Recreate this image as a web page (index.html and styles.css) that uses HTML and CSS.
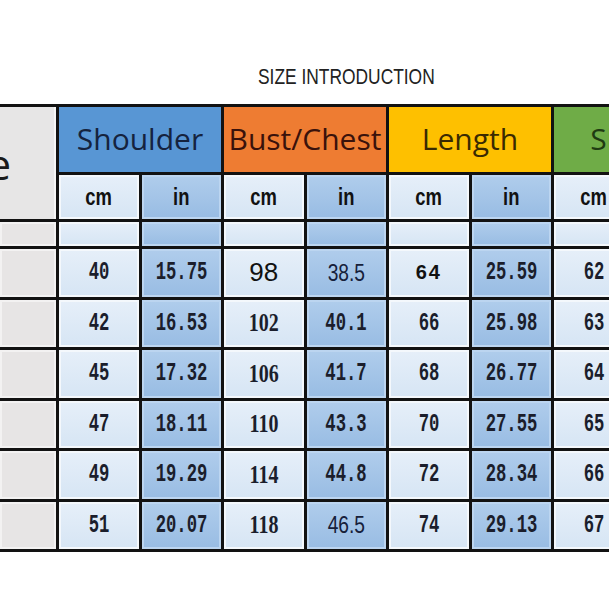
FILE: index.html
```html
<!DOCTYPE html>
<html>
<head>
<meta charset="utf-8">
<link rel="stylesheet" href="styles.css">
</head>
<body>
<div class="title"><span class="title-text">SIZE INTRODUCTION</span></div>
<div class="chart">
  <div class="size-head"><span>Size</span></div>
  <div class="gh shoulder">Shoulder</div>
  <div class="gh bust">Bust/Chest</div>
  <div class="gh length">Length</div>
  <div class="gh sleeve">Sleeve</div>

  <div class="c cm unit"><span>cm</span></div>
  <div class="c in unit"><span>in</span></div>
  <div class="c cm unit"><span>cm</span></div>
  <div class="c in unit"><span>in</span></div>
  <div class="c cm unit"><span>cm</span></div>
  <div class="c in unit"><span>in</span></div>
  <div class="c cm unit"><span>cm</span></div>
  <div class="c in unit"><span>in</span></div>

  <div class="c size"></div>
  <div class="c cm"></div><div class="c in"></div>
  <div class="c cm"></div><div class="c in"></div>
  <div class="c cm"></div><div class="c in"></div>
  <div class="c cm"></div><div class="c in"></div>

  <div class="c size"></div>
  <div class="c cm"><span class="m">40</span></div><div class="c in"><span class="m">15.75</span></div>
  <div class="c cm"><span class="s">98</span></div><div class="c in"><span class="nw">38.5</span></div>
  <div class="c cm"><span class="sb">64</span></div><div class="c in"><span class="m">25.59</span></div>
  <div class="c cm"><span class="m">62</span></div><div class="c in"><span class="m">24.41</span></div>

  <div class="c size"></div>
  <div class="c cm"><span class="m">42</span></div><div class="c in"><span class="m">16.53</span></div>
  <div class="c cm"><span class="sf">102</span></div><div class="c in"><span class="m">40.1</span></div>
  <div class="c cm"><span class="m">66</span></div><div class="c in"><span class="m">25.98</span></div>
  <div class="c cm"><span class="m">63</span></div><div class="c in"><span class="m">24.80</span></div>

  <div class="c size"></div>
  <div class="c cm"><span class="m">45</span></div><div class="c in"><span class="m">17.32</span></div>
  <div class="c cm"><span class="sf">106</span></div><div class="c in"><span class="m">41.7</span></div>
  <div class="c cm"><span class="m">68</span></div><div class="c in"><span class="m">26.77</span></div>
  <div class="c cm"><span class="m">64</span></div><div class="c in"><span class="m">25.20</span></div>

  <div class="c size"></div>
  <div class="c cm"><span class="m">47</span></div><div class="c in"><span class="m">18.11</span></div>
  <div class="c cm"><span class="sf">110</span></div><div class="c in"><span class="m">43.3</span></div>
  <div class="c cm"><span class="m">70</span></div><div class="c in"><span class="m">27.55</span></div>
  <div class="c cm"><span class="m">65</span></div><div class="c in"><span class="m">25.59</span></div>

  <div class="c size"></div>
  <div class="c cm"><span class="m">49</span></div><div class="c in"><span class="m">19.29</span></div>
  <div class="c cm"><span class="sf">114</span></div><div class="c in"><span class="m">44.8</span></div>
  <div class="c cm"><span class="m">72</span></div><div class="c in"><span class="m">28.34</span></div>
  <div class="c cm"><span class="m">66</span></div><div class="c in"><span class="m">25.98</span></div>

  <div class="c size"></div>
  <div class="c cm"><span class="m">51</span></div><div class="c in"><span class="m">20.07</span></div>
  <div class="c cm"><span class="sf">118</span></div><div class="c in"><span class="nw">46.5</span></div>
  <div class="c cm"><span class="m">74</span></div><div class="c in"><span class="m">29.13</span></div>
  <div class="c cm"><span class="m">67</span></div><div class="c in"><span class="m">26.38</span></div>
</div>
</body>
</html>
```

FILE: styles.css
```css
html, body {
  margin: 0;
  padding: 0;
  background: #ffffff;
  overflow: hidden;
  width: 609px;
  height: 609px;
}

.title {
  height: 42px;
  padding-top: 62px;
  padding-left: 258px;
  line-height: 30px;
  box-sizing: content-box;
}

.title-text {
  display: inline-block;
  font-family: "Liberation Sans", Arial, sans-serif;
  font-size: 22px;
  color: #222;
  white-space: nowrap;
  transform: scaleX(0.79);
  transform-origin: left center;
}

.chart {
  display: grid;
  width: max-content;
  grid-template-columns: 56px repeat(8, 79.5px);
  grid-template-rows: 65px 44px 24px repeat(6, 47.5px);
  gap: 3px;
  padding: 3px 3px 3px 0;
  background: #121212;
}

.size-head {
  grid-row: span 2;
  background: #e7e6e6;
  box-shadow: inset -2px 0 0 #f6f6f6;
  display: flex;
  align-items: center;
  justify-content: flex-end;
  padding-right: 45px;
  overflow: visible;
  white-space: nowrap;
  font-family: "Open Sans", "Noto Sans", sans-serif;
  font-size: 42px;
  color: #1a1a1a;
}

.gh {
  grid-column: span 2;
  display: flex;
  align-items: center;
  justify-content: center;
  white-space: nowrap;
  font-family: "Open Sans", "Noto Sans", sans-serif;
  font-size: 30px;
  padding-bottom: 2px;
  box-sizing: border-box;
}

.shoulder { background: #5896d4; color: #15233e; }
.bust { background: #ee7c32; color: #3a120b; }
.length { background: #fec000; color: #3a2a02; }
.sleeve { background: #6fac47; color: #1f3b12; justify-content: center; }

.c {
  display: flex;
  align-items: center;
  justify-content: center;
  white-space: nowrap;
  color: #1b1e2c;
}

.cm {
  background: linear-gradient(180deg, #e6eff9 0%, #d6e5f4 100%);
  box-shadow: inset 0 0 0 2px #f4f8fc;
}

.in {
  background: linear-gradient(180deg, #b0cdec 0%, #98bce3 100%);
  box-shadow: inset 0 0 0 2px #bcd5f0;
}

.size {
  background: #e7e5e5;
  box-shadow: inset 0 0 0 2px #f3f2f2;
}

.unit span {
  display: inline-block;
  font-family: "Liberation Sans", Arial, sans-serif;
  font-weight: bold;
  font-size: 23px;
  color: #111;
  transform: scaleX(0.8);
}

.m {
  display: inline-block;
  font-family: "Liberation Mono", "Courier New", monospace;
  font-weight: bold;
  font-size: 25px;
  transform: scaleX(0.69);
}

.sf {
  display: inline-block;
  font-family: "Liberation Serif", "Times New Roman", serif;
  font-weight: bold;
  font-size: 25px;
  transform: scaleX(0.8);
}

.s {
  display: inline-block;
  font-family: "Liberation Sans", Arial, sans-serif;
  font-size: 26px;
  color: #111;
}

.sb {
  display: inline-block;
  font-family: "Liberation Sans", Arial, sans-serif;
  font-weight: bold;
  font-size: 20px;
  letter-spacing: 2px;
  color: #111;
}

.nw {
  display: inline-block;
  font-family: "Liberation Sans", Arial, sans-serif;
  font-size: 24px;
  color: #16203a;
  transform: scaleX(0.8);
}
```
